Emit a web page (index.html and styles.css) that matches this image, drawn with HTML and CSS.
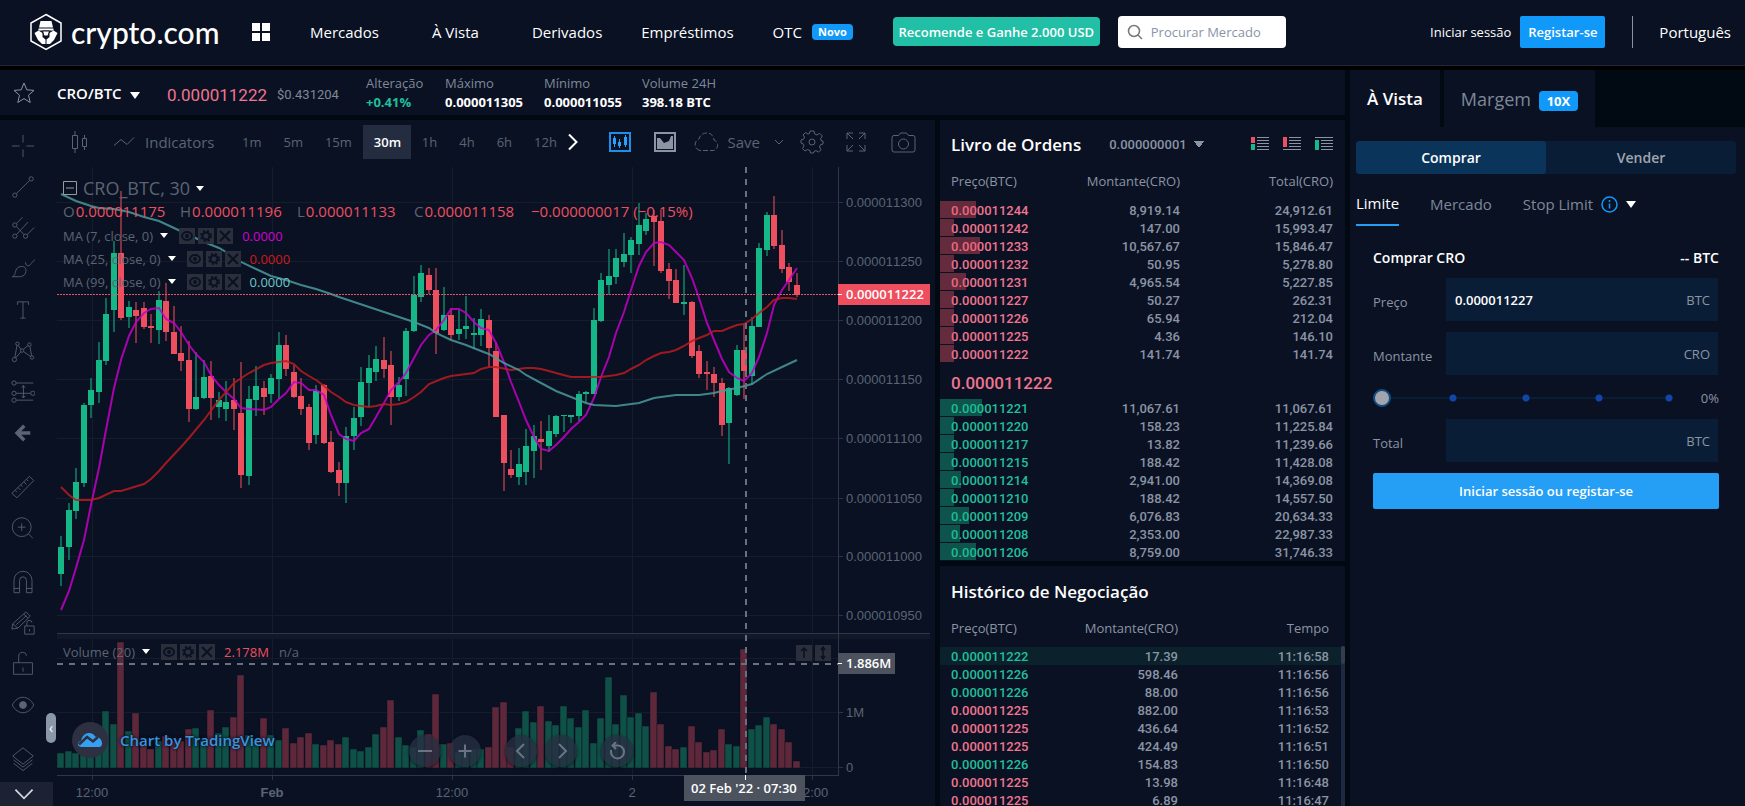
FILE: index.html
```html
<!DOCTYPE html>
<html lang="pt">
<head>
  <meta charset="UTF-8" />
  <meta name="viewport" content="width=device-width, initial-scale=1" />
  <title>CRO/BTC | Crypto.com Exchange</title>
  <link rel="stylesheet" href="styles.css">
</head>
<body>

<!-- Header -->
<header class="header">
  <a class="logo" href="#" aria-label="crypto.com">
    <svg width="34" height="38" viewBox="0 0 34 38">
      <path d="M17 1.500 32 10v18L17 36.500 2 28V10z" fill="none" stroke="#fff" stroke-width="1.500"/>
      <path d="M11.500 8h11l1.500 6.500H10z M9.500 15.500h15v2h-15z M5.500 20l4-2.500 4 2.500v4l3 2.500v4.500h-3.500L9 27z M28.500 20l-4-2.500-4 2.500v4l-3 2.500v4.500H21l4-4z" fill="#fff"/>
      <path d="M13.500 18h7l-1.500 5h-4z" fill="#fff" stroke="#0a1123"/>
    </svg>
    <span>crypto.com</span>
  </a>
  <button class="apps" aria-label="Apps">
    <svg width="18" height="18" viewBox="0 0 18 18" fill="#fff"><path d="M0 0h8v8H0zM10 0h8v8h-8zM0 10h8v8H0zM10 10h8v8h-8z"/></svg>
  </button>
  <nav class="nav">
    <a class="wide" href="#">Mercados</a>
    <a class="wide" href="#">À Vista</a>
    <a href="#">Derivados</a>
    <a href="#">Empréstimos</a>
    <a class="otc" href="#">OTC <span class="badge">Novo</span></a>
  </nav>
  <button class="refer">Recomende e Ganhe 2.000 USD</button>
  <label class="search">
    <svg width="16" height="16" viewBox="0 0 16 16" fill="none" stroke="#777" stroke-width="1.500"><circle cx="7" cy="7" r="5.500"/><path d="M11 11l4 4"/></svg>
    <input type="text" placeholder="Procurar Mercado" aria-label="Procurar Mercado">
  </label>
  <div class="account">
    <a class="login" href="#">Iniciar sessão</a>
    <a class="signup" href="#">Registar-se</a>
    <a class="lang" href="#">Português</a>
  </div>
</header>

<main class="exchange">
  <!-- Ticker -->
  <section class="ticker">
    <button class="star" aria-label="Favorito">
      <svg width="22" height="22" viewBox="0 0 22 22" fill="none" stroke="#8a94a3"><path d="M11 1l2.800 6.800 7.200.6-5.500 4.800 1.700 7.300L11 16.600l-6.200 3.900 1.700-7.300L1 8.400l7.200-.6z" stroke-linejoin="round"/></svg>
    </button>
    <button class="pair">CRO/BTC <i class="caret"></i></button>
    <span class="price">0.000011222</span>
    <span class="usd">$0.431204</span>
    <dl class="stats">
      <div><dt>Alteração</dt><dd class="up">+0.41%</dd></div>
      <div><dt>Máximo</dt><dd>0.000011305</dd></div>
      <div><dt>Mínimo</dt><dd>0.000011055</dd></div>
      <div><dt>Volume 24H</dt><dd>398.18 BTC</dd></div>
    </dl>
  </section>

  <!-- Chart -->
  <section class="chart">
    <div class="tools">
      <button aria-label="Cross"><svg viewBox="0 0 28 28"><path d="M14 1v9M14 18v9M1 14h9M18 14h9"/></svg></button>
      <button aria-label="Trend line"><svg viewBox="0 0 28 28"><circle cx="4.500" cy="23.500" r="2.500"/><circle cx="23.500" cy="4.500" r="2.500"/><path d="M6.500 21.500l15-15"/></svg></button>
      <button aria-label="Pitchfork"><svg viewBox="0 0 28 28"><circle cx="4.500" cy="10.500" r="2.500"/><circle cx="4.500" cy="23.500" r="2.500"/><circle cx="17" cy="23.500" r="2.500"/><path d="M6.500 8.500l7-7M6.500 21.500L20 7M19 21.500l8-8M6.500 12.500l8.500 9"/></svg></button>
      <button aria-label="Brush"><svg viewBox="0 0 28 28"><path d="M1.500 23c4-1 3-6 5-9 3-4.500 11-4 11 1.500 0 5-3.500 7.500-8 7.500zM17 6c0 6 5 5 6 2l5-5"/></svg></button>
      <button aria-label="Text"><svg viewBox="0 0 28 28"><path d="M7.500 8V4.500h13V8M14 4.500v19M11 23.500h6"/></svg></button>
      <button aria-label="Pattern"><svg viewBox="0 0 28 28"><circle cx="7.500" cy="5.500" r="2"/><circle cx="21.500" cy="6.500" r="2"/><circle cx="13" cy="13.500" r="2"/><circle cx="4" cy="24" r="2.500"/><circle cx="24.500" cy="21.500" r="2"/><path d="M8.500 7.500l3 4.500M14.500 12l5.500-4.500M7 7.500L4.500 21.500M22 8.500l2 11M5.500 22l6-7M15 15l8 5.500"/></svg></button>
      <button aria-label="Position"><svg viewBox="0 0 28 28"><circle cx="3.500" cy="3.500" r="2.500"/><circle cx="3.500" cy="15.500" r="2.500"/><circle cx="25.500" cy="15.500" r="2.500"/><circle cx="3.500" cy="23.500" r="2.500"/><path d="M6 3.500h20M6 15.500h17M6 23.500h20M14.500 6.500v14M12.500 9l2-2.500 2 2.500M12.500 18.500l2 2.500 2-2.500"/></svg></button>
      <button aria-label="Back"><svg viewBox="0 0 28 28"><path d="M15.500 5.500L7 14l8.500 8.500M8 14h14.500" stroke-width="4"/></svg></button>
      <button class="first" aria-label="Ruler"><svg viewBox="0 0 28 28"><path d="M1 21.500L21.500 1.500l5 5L7 26.500zM5 18l2 2M8 14.500l3 3M11.500 11.500l2 2M15 8l3 3M18 5l2 2"/></svg></button>
      <button aria-label="Zoom"><svg viewBox="0 0 28 28"><circle cx="12.500" cy="13" r="11"/><path d="M20.500 21l5 5M8 13h9M12.500 8.500v9"/></svg></button>
      <button class="first" aria-label="Magnet"><svg viewBox="0 0 28 28"><path d="M3.500 26.500V12a10.500 10.500 0 0121 0v14.500h-6.500V12a4 4 0 00-8 0v14.500zM3.500 21.500H10M18 21.500h6.500"/></svg></button>
      <button aria-label="Drawing mode"><svg viewBox="0 0 28 28"><path d="M1 21l1-6L17.500 1l5 5L8 20zM2 15l6 5M15 3.500l5 5M6 16L18 5.500M16 17.500h11v9.500H16zM18.500 17.500v-3a3 3 0 016-1M21.500 21v3"/></svg></button>
      <button aria-label="Lock"><svg viewBox="0 0 28 28"><path d="M3 12.500h22v13.500H3zM9 12.500V5.500a4.500 4.500 0 019-1M14 18v5"/></svg></button>
      <button aria-label="Hide"><svg viewBox="0 0 28 28"><path d="M1.500 14c6-12 19-12 25 0-6 12-19 12-25 0z"/><circle cx="14" cy="14" r="4" fill="#5b6472"/></svg></button>
      <button class="first" aria-label="Objects"><svg viewBox="0 0 28 28"><path d="M14 1l12 9.500L14 20 2 10.500zM3 15l11 8.500L25 15M3 19l11 8.500L25 19"/></svg></button>
      <button class="more" aria-label="Mais"><svg viewBox="0 0 28 28"><path d="M4 9l10 10L24 9" stroke="#d5d9e0" stroke-width="2"/></svg></button>
    </div>

    <div class="chart-main">
      <div class="bar">
        <button class="kind" aria-label="Candles"><svg width="18" height="24" viewBox="0 0 18 24"><path d="M2.500 5.500h5v13h-5zM5 1v4.500M5 18.500V23M12.500 8.500h4v8h-4zM14.500 5v3.500M14.500 16.500V20"/></svg></button>
        <button class="indicators"><svg width="22" height="12" viewBox="0 0 22 12"><path d="M1 9.500l7-6 6 5 7-7"/></svg>Indicators</button>
        <div class="intervals">
          <button>1m</button>
          <button>5m</button>
          <button>15m</button>
          <button class="active">30m</button>
          <button>1h</button>
          <button>4h</button>
          <button>6h</button>
          <button class="end">12h</button>
        </div>
        <button class="next" aria-label="Próximo"><svg width="10" height="18" viewBox="0 0 10 18"><path d="M1 1.500L8.500 9 1 16.500" stroke="#fff" stroke-width="2"/></svg></button>
        <button class="view" aria-label="Chart"><svg width="22" height="20" viewBox="0 0 22 20"><path d="M1 1h20v18H1z" stroke="#1d8fe8" stroke-width="2"/><path d="M4 6h3v6H4zM9 10h3v4H9zM15 5h3v8h-3zM5 4h1v11H5zM10 7h1v9h-1zM16 3h1v12h-1z" fill="#29a0ff" stroke="none"/></svg></button>
        <button class="depth-view" aria-label="Depth"><svg width="22" height="20" viewBox="0 0 22 20"><path d="M1 1h20v18H1z" stroke="#8a94a3" stroke-width="2"/><path d="M3 17V6h3l4 5 5-2 2-5h2v13z" fill="#8a94a3" stroke="none"/></svg></button>
        <button class="save"><svg width="27" height="20" viewBox="0 0 27 20"><path d="M7 18.500a6 6 0 01-1-11.500C7.500 2 11 1 14 1c4 0 6.500 3 7 7a5.500 5.500 0 01-.5 10.500z" stroke-dasharray="5 2"/></svg>Save</button>
        <button class="drop" aria-label="Layouts"><svg width="10" height="6" viewBox="0 0 10 6"><path d="M1 1l4 4 4-4"/></svg></button>
        <button class="gear" aria-label="Settings"><svg width="24" height="24" viewBox="0 0 24 24"><path d="M10 1h4l.7 3 2.300 1 2.700-1.700 2.700 2.700L20.500 8.700l1 2.300H23v3l-2.500.7-1 2.300 1.500 2.700-2.500 2.500L16 20.500l-2 1-.5 1.500h-3L10 20.500l-2.500-1L5 21l-2.500-2.500L4 16l-1-2.300-2-.7v-3l2.500-.7 1-2.300L3 5l2.500-2.500L8 4l1.500-.5z"/><circle cx="12" cy="12" r="3"/></svg></button>
        <button class="full" aria-label="Fullscreen"><svg width="20" height="20" viewBox="0 0 20 20"><path d="M1 7V1h6M1 1l6 6M19 7V1h-6M19 1l-6 6M1 13v6h6M1 19l6-6M19 13v6h-6M19 19l-6-6"/></svg></button>
        <button class="camera" aria-label="Screenshot"><svg width="25" height="21" viewBox="0 0 25 21"><path d="M3 3.500h4.500l2-2.500h6l2 2.500H22a2 2 0 012 2V18a2 2 0 01-2 2H3a2 2 0 01-2-2V5.500a2 2 0 012-2z"/><circle cx="12.500" cy="12" r="5"/></svg></button>
      </div>

      <div class="stage">
        <svg class="plot" id="plot" viewBox="57 167 878 639" preserveAspectRatio="xMinYMin meet"></svg>

        <div class="legend">
          <p class="symbol"><svg width="14" height="14" viewBox="0 0 14 14"><path d="M.5.500h13v13H.500zM3 7h8" fill="none" stroke="#9a9a9a"/></svg>CRO_BTC, 30 <i class="caret"></i></p>
          <p class="ohlc"><span>O<b>0.000011175</b></span><span>H<b>0.000011196</b></span><span>L<b>0.000011133</b></span><span>C<b>0.000011158</b></span><b>−0.000000017 (−0.15%)</b></p>
          <p class="study">MA (7, close, 0) <i class="caret"></i><span class="acts"></span><b class="ma7">0.0000</b></p>
          <p class="study">MA (25, close, 0) <i class="caret"></i><span class="acts"></span><b class="ma25">0.0000</b></p>
          <p class="study">MA (99, close, 0) <i class="caret"></i><span class="acts"></span><b class="ma99">0.0000</b></p>
        </div>

        <div class="legend volume">
          <p class="study">Volume (20) <i class="caret"></i><span class="acts"></span><b class="vol">2.178M</b><span class="na">n/a</span></p>
        </div>

        <button class="collapse" aria-label="Recolher">‹</button>

        <a class="brand" href="#">
          <span><svg width="26" height="16" viewBox="0 0 26 16"><path d="M1 12.500c0-2 1-3 3-3.500C5 4 8 1 12 1c3 0 5 1.500 6 3.500 4 0 7 3 7 7 0 2-1 3.500-3 3.500H5c-2.500 0-4-1-4-2.500z" fill="#35a0f0"/><path d="M2 12.500L10 5l6 4.500L21 5" fill="none" stroke="#2c3040" stroke-width="2.500"/></svg></span>
          Chart by TradingView
        </a>

        <div class="controls">
          <button aria-label="Zoom out"><svg viewBox="0 0 18 18"><path d="M2 9h14"/></svg></button>
          <button aria-label="Zoom in"><svg viewBox="0 0 18 18"><path d="M2.500 9h13M9 2.500v13"/></svg></button>
          <button class="gap" aria-label="Left"><svg viewBox="0 0 18 18"><path d="M12 2L5 9l7 7"/></svg></button>
          <button aria-label="Right"><svg viewBox="0 0 18 18"><path d="M7 2l7 7-7 7"/></svg></button>
          <button class="gap" aria-label="Reset"><svg viewBox="0 0 18 18"><path d="M3 8v2a6.500 6.500 0 106-6.500H5.500M8 0L4.500 3.500 8 7"/></svg></button>
        </div>
      </div>
    </div>
  </section>

  <!-- Order book -->
  <section class="book">
    <div class="book-head">
      <h2>Livro de Ordens</h2>
      <select aria-label="Decimais"><option>0.000000001</option></select>
      <div class="modes">
        <button aria-label="Tudo"><svg width="18" height="14" viewBox="0 0 18 14"><path d="M0 0h4v6H0z" fill="#ea5263"/><path d="M0 7h4v6H0z" fill="#17b889"/><path d="M6 .5h12M6 3.500h12M6 6.500h12M6 9.500h12M6 12.500h12" stroke="#8a94a3"/></svg></button>
        <button aria-label="Vendas"><svg width="18" height="14" viewBox="0 0 18 14"><path d="M0 0h4v10H0z" fill="#ea5263"/><path d="M6 .5h12M6 3.500h12M6 6.500h12M6 9.500h12M0 12.500h18" stroke="#8a94a3"/></svg></button>
        <button aria-label="Compras"><svg width="18" height="14" viewBox="0 0 18 14"><path d="M0 3h4v10H0z" fill="#17b889"/><path d="M0 .5h18M6 3.500h12M6 6.500h12M6 9.500h12M6 12.500h12" stroke="#8a94a3"/></svg></button>
      </div>
    </div>
    <table>
      <thead><tr><th>Preço(BTC)</th><th>Montante(CRO)</th><th>Total(CRO)</th></tr></thead>
      <tbody class="sell" id="asks"></tbody>
    </table>
    <p class="last">0.000011222</p>
    <table>
      <tbody class="buy" id="bids"></tbody>
    </table>
  </section>

  <!-- Trade history -->
  <section class="history">
    <h2>Histórico de Negociação</h2>
    <div class="scroll">
      <table>
        <thead><tr><th>Preço(BTC)</th><th>Montante(CRO)</th><th>Tempo</th></tr></thead>
        <tbody id="trades"></tbody>
      </table>
      <div class="track"><div class="thumb"></div></div>
    </div>
  </section>

  <!-- Order form -->
  <aside class="order">
    <div class="tabs">
      <button class="active">À Vista</button>
      <button>Margem <span class="badge">10X</span></button>
    </div>
    <div class="order-body">
      <div class="side">
        <button class="active">Comprar</button>
        <button>Vender</button>
      </div>
      <div class="types">
        <button class="active">Limite</button>
        <button>Mercado</button>
        <button>Stop Limit
          <svg width="17" height="17" viewBox="0 0 17 17" fill="none" stroke="#1199fa" stroke-width="1.500"><circle cx="8.500" cy="8.500" r="7.500"/><path d="M8.500 7.500v5M8.500 4v2"/></svg>
          <i class="caret"></i>
        </button>
      </div>
      <form class="form">
        <div class="form-head"><h3>Comprar CRO</h3><span>-- BTC</span></div>
        <div class="field"><label for="preco">Preço</label><div class="box"><input id="preco" type="text" value="0.000011227"><span>BTC</span></div></div>
        <div class="field"><label for="montante">Montante</label><div class="box"><input id="montante" type="text"><span>CRO</span></div></div>
        <div class="slider"><input type="range" min="0" max="100" value="0" aria-label="Percentagem"><span>0%</span></div>
        <div class="field"><label for="total">Total</label><div class="box"><input id="total" type="text"><span>BTC</span></div></div>
        <button class="submit" type="button">Iniciar sessão ou registar-se</button>
      </form>
    </div>
  </aside>
</main>

<script src="script.js"></script>
</body>
</html>
```
FILE: styles.css
```css
* {
  box-sizing: border-box;
}
body {
  font-family: "Open Sans", sans-serif;
  font-size: 14px;
  margin: 0;
  height: 100vh;
  overflow: hidden;
  display: flex;
  flex-direction: column;
  background: #010913;
  color: #fff;
}
a {
  color: inherit;
  text-decoration: none;
}
button, input, select {
  font: inherit;
  color: inherit;
  background: none;
  border: 0;
  padding: 0;
  margin: 0;
}
button {
  cursor: pointer;
}
h2, h3, p, dl, dd {
  margin: 0;
}
svg {
  display: block;
}
.caret {
  display: inline-block;
  border: 5px solid transparent;
  border-top: 7px solid #fff;
  border-bottom: 0;
}

/* Header */
.header {
  display: flex;
  align-items: center;
  height: 70px;
  padding: 0 14px 7px 29px;
  background: linear-gradient(#0a1123 65px, #1e2638 65px, #1e2638 66px, #000 66px);
  white-space: nowrap;
}
.header > * {
  flex-shrink: 0;
}
.logo {
  display: flex;
  align-items: center;
  gap: 8px;
  width: 223px;
  font-family: Lato, sans-serif;
  font-size: 30px;
  font-weight: 500;
  line-height: 34px;
}
.nav {
  display: flex;
  gap: 39px;
  margin: 0 40px;
  font-size: 15px;
}
.nav .wide {
  margin-right: 14px;
}
.otc {
  display: flex;
  align-items: center;
  gap: 10px;
}
.badge {
  background: #1199fa;
  border-radius: 4px;
  font-weight: bold;
  font-size: 11px;
  line-height: 16px;
  padding: 0 6px;
}
.refer {
  height: 29px;
  width: 207px;
  border-radius: 4px;
  background: #21bfa5;
  font-size: 13px;
  font-weight: 600;
}
.search {
  display: flex;
  align-items: center;
  gap: 8px;
  width: 168px;
  height: 32px;
  margin-left: 18px;
  padding-left: 9px;
  background: #fff;
  border-radius: 4px;
}
.search input {
  width: 130px;
  font-size: 13px;
  color: #333;
}
.search input::placeholder {
  color: #8a94a6;
}
.account {
  display: flex;
  align-items: center;
  margin-left: auto;
}
.login {
  font-size: 13px;
}
.signup {
  margin: 0 27px 0 9px;
  width: 85px;
  text-align: center;
  line-height: 32px;
  background: #1199fa;
  border-radius: 2px;
  font-size: 13px;
  font-weight: 600;
}
.lang {
  border-left: 1px solid #8a94a6;
  padding-left: 26px;
  line-height: 32px;
  font-size: 15px;
}

/* Page grid */
.exchange {
  flex: 1;
  min-height: 0;
  display: grid;
  grid-template-columns: 1fr 405px 395px;
  grid-template-rows: 45px 441px 1fr;
  gap: 5px;
}
.ticker, .chart, .book, .history, .order-body, .tabs button {
  background: #0a1123;
}
.ticker {
  grid-column: 1 / 3;
}
.chart {
  grid-column: 1;
  grid-row: 2 / 4;
}
.book {
  grid-column: 2;
  grid-row: 2;
}
.history {
  grid-column: 2;
  grid-row: 3;
}
.order {
  grid-column: 3;
  grid-row: 1 / 4;
}

/* Ticker */
.ticker {
  display: flex;
  align-items: center;
  padding-left: 13px;
  white-space: nowrap;
}
.pair {
  width: 88px;
  margin: 0 22px;
  text-align: left;
  font-size: 15px;
  font-weight: 600;
}
.pair .caret {
  margin-left: 4px;
}
.price {
  font-family: Roboto, sans-serif;
  font-size: 17px;
  width: 110px;
  padding-top: 4px;
  color: #f0758f;
}
.usd {
  font-family: Roboto, sans-serif;
  font-size: 13px;
  width: 89px;
  padding-top: 4px;
  color: #7e8898;
}
.stats {
  display: grid;
  grid-template-columns: 79px 99px 98px 100px;
  font-size: 13px;
  line-height: 19px;
}
.stats dt {
  color: #7e8898;
}
.stats dd {
  font-weight: bold;
}
.stats .up {
  color: #20bf9b;
}

/* Chart */
.chart {
  display: flex;
  min-height: 0;
  min-width: 0;
  color: #5b6472;
}
.tools {
  width: 57px;
  flex-shrink: 0;
  display: flex;
  flex-direction: column;
  padding-top: 5px;
}
.tools button {
  width: 46px;
  height: 41px;
  flex-shrink: 0;
  display: grid;
  place-items: center;
}
.tools .first {
  margin-top: 13px;
}
.tools .more {
  width: 53px;
  height: 24px;
  margin-top: auto;
  padding-right: 6px;
  background: #1c2234;
}
.tools svg {
  width: 24px;
  height: 24px;
  fill: none;
  stroke: #5b6472;
}
.chart-main {
  flex: 1;
  min-width: 0;
  display: flex;
  flex-direction: column;
}
.bar {
  display: flex;
  align-items: center;
  height: 47px;
  padding: 0 19px 3px 13px;
}
.bar button {
  flex-shrink: 0;
}
.bar svg {
  fill: none;
  stroke: #5b6472;
}
.indicators {
  display: flex;
  align-items: center;
  gap: 10px;
  width: 118px;
  margin-left: 25px;
  font-size: 15px;
}
.intervals {
  display: flex;
  align-items: center;
  font-size: 13px;
}
.intervals button {
  height: 34px;
  padding: 0 11px;
}
.intervals .active {
  width: 48px;
  background: #232d3f;
  color: #fff;
  font-weight: 600;
}
.intervals .end {
  padding-right: 0;
}
.next {
  margin: 0 auto 0 11px;
}
.view {
  margin-right: 23px;
}
.depth-view {
  margin-right: 17px;
}
.save {
  display: flex;
  align-items: center;
  gap: 8px;
  font-size: 15px;
}
.drop {
  margin: 0 16px 0 14px;
}
.full {
  margin: 0 25px 0 22px;
}
.stage {
  position: relative;
  flex: 1;
  min-height: 0;
}
.plot {
  width: 100%;
  height: 100%;
}
.plot text {
  font-family: "Liberation Sans", sans-serif;
  font-size: 13px;
  font-kerning: none;
  fill: #5b6472;
}
.plot .tag {
  font-family: "Open Sans", sans-serif;
  font-weight: 600;
  fill: #fff;
}
.plot .day {
  font-weight: bold;
}

/* Text over the chart */
.legend {
  position: absolute;
  left: 6px;
  top: 9px;
  white-space: nowrap;
}
.legend.volume {
  top: 473px;
}
.legend b {
  font-weight: normal;
  color: #ee4f5f;
}
.legend .caret {
  border-width: 5px 4px 0;
}
.symbol {
  display: flex;
  align-items: center;
  gap: 6px;
  font-size: 18px;
  line-height: 24px;
}
.ohlc {
  display: flex;
  font-size: 15px;
  line-height: 22px;
  margin-bottom: 2px;
}
.ohlc span {
  width: 117px;
}
.ohlc span b {
  margin-left: 1px;
}
.study {
  display: flex;
  align-items: center;
  height: 23px;
  font-size: 13px;
}
.study .caret {
  margin: 0 11px 0 7px;
}
.study .na {
  margin-left: 10px;
}
.acts {
  display: flex;
  gap: 3px;
  margin-right: 9px;
}
.acts button {
  width: 16px;
  height: 16px;
  background: #2a2f3b;
}
.acts svg {
  fill: none;
  stroke: #0a1123;
  stroke-width: 2;
}
.legend .ma7 {
  color: #d400d4;
}
.legend .ma25 {
  color: #d01818;
}
.legend .ma99 {
  color: #6cc8c8;
}
.collapse {
  position: absolute;
  left: -11px;
  top: 546px;
  width: 10px;
  height: 30px;
  border-radius: 5px;
  background: #8a97a8;
  color: #fff;
  line-height: 26px;
}
.brand {
  position: absolute;
  left: 15px;
  top: 555px;
  display: flex;
  align-items: center;
  gap: 12px;
  font-size: 15px;
  font-weight: 600;
  color: #3a94dc;
  text-shadow: 0 0 3px #0a1123, 0 0 3px #0a1123;
}
.brand span {
  width: 36px;
  height: 36px;
  display: grid;
  place-items: center;
  border-radius: 50%;
  background: #2c3040;
}
.controls {
  position: absolute;
  left: 352px;
  top: 568px;
  display: flex;
  gap: 8px;
}
.controls button {
  width: 32px;
  height: 32px;
  display: grid;
  place-items: center;
  border-radius: 50%;
  background: rgba(38, 46, 65, 0.8);
  box-shadow: 0 1px 3px rgba(0, 0, 0, 0.6);
}
.controls .gap {
  margin-left: 16px;
}
.controls svg {
  width: 18px;
  height: 18px;
  fill: none;
  stroke: #6a7383;
  stroke-width: 2;
}

/* Order book and history */
h2 {
  font-size: 17px;
  font-weight: 600;
}
.book-head {
  display: flex;
  align-items: center;
  height: 48px;
  padding: 0 12px 0 11px;
}
.book-head select {
  appearance: none;
  width: 96px;
  margin-left: 28px;
  font-family: Roboto, sans-serif;
  font-size: 13px;
  font-weight: 500;
  color: #8a94a3;
  background: linear-gradient(to bottom left, #8a94a3 50%, transparent 50%) 85px 4px / 5px 7px no-repeat,
    linear-gradient(to bottom right, #8a94a3 50%, transparent 50%) 90px 4px / 5px 7px no-repeat;
}
.modes {
  display: flex;
  gap: 14px;
  margin-left: auto;
}
table {
  width: 100%;
  table-layout: fixed;
  border-collapse: collapse;
  font-family: Roboto, sans-serif;
  font-size: 13px;
  font-weight: 500;
  color: #8a94a3;
}
th {
  height: 33px;
  padding: 0 0 7px;
  font-family: "Open Sans", sans-serif;
  font-weight: normal;
  text-align: right;
}
td {
  height: 18px;
  padding: 0;
  text-align: right;
}
th:first-child, td:first-child {
  position: relative;
  width: 130px;
  padding-left: 11px;
  text-align: left;
}
th:nth-child(2), td:nth-child(2) {
  width: 110px;
}
th:last-child, td:last-child {
  padding-right: 12px;
}
.depth {
  position: absolute;
  left: 0;
  top: 0;
  height: 17px;
}
.sell .depth {
  background: rgba(234, 82, 99, 0.4);
}
.buy .depth {
  background: rgba(23, 184, 137, 0.4);
}
.sell td:first-child, .down {
  color: #f0758f;
}
.buy td:first-child, .rise {
  color: #20bf9b;
}
.last {
  height: 36px;
  padding-left: 11px;
  font-family: Roboto, sans-serif;
  font-size: 17px;
  font-weight: 500;
  line-height: 40px;
  color: #f0758f;
}
.history {
  min-height: 0;
  overflow: hidden;
}
.history h2 {
  padding-left: 11px;
  line-height: 52px;
}
.scroll {
  display: flex;
}
.history th {
  height: 29px;
  padding-bottom: 9px;
}
.history th:nth-child(2) {
  width: 108px;
}
.history tbody tr:first-child {
  background: #0b212c;
}
.track {
  width: 4px;
  flex-shrink: 0;
  margin-top: 28px;
  background: #1d2943;
  border-radius: 2px;
}
.thumb {
  height: 18px;
  border-radius: 2px;
  background: #343c50;
}

/* Order form */
.order {
  display: flex;
  flex-direction: column;
}
.tabs {
  display: flex;
  gap: 4px;
  height: 57px;
}
.tabs button {
  padding: 0 17px;
  font-size: 18px;
  color: #7e8898;
}
.tabs .active {
  color: #fff;
  font-size: 17px;
  font-weight: 600;
}
.tabs .badge {
  display: inline-block;
  margin-left: 3px;
  color: #fff;
  font-size: 13px;
  line-height: 20px;
  padding: 0 8px;
}
.order-body {
  flex: 1;
  padding: 14px 9px 0 6px;
}
.side {
  display: flex;
  border-radius: 3px;
  background: #0a1d36;
  overflow: hidden;
}
.side button {
  flex: 1;
  height: 33px;
  font-weight: 600;
  color: #a0a6b0;
}
.side .active {
  background: #0b345a;
  color: #fff;
  border-radius: 3px;
}
.types {
  display: flex;
  gap: 31px;
  height: 52px;
  font-size: 15px;
  color: #7e8898;
}
.types button {
  display: flex;
  align-items: center;
  gap: 8px;
  padding-top: 8px;
}
.types .active {
  color: #fff;
  border-bottom: 2px solid #259ff5;
}
.form {
  padding: 20px 17px 0;
}
.form-head {
  display: flex;
  justify-content: space-between;
  line-height: 24px;
  margin-bottom: 8px;
}
.form-head h3, .form-head span {
  font-size: 14px;
  font-weight: 600;
}
.field {
  display: flex;
  align-items: center;
  margin: 0 1px 11px 0;
  font-size: 13px;
  color: #8a94a3;
}
.field label {
  width: 73px;
  padding-top: 4px;
}
.box {
  flex: 1;
  display: flex;
  align-items: center;
  height: 43px;
  padding: 0 8px 0 9px;
  background: #0a1d36;
}
.box input {
  flex: 1;
  min-width: 0;
  color: #fff;
  font-weight: 600;
}
.slider {
  display: flex;
  align-items: center;
  justify-content: space-between;
  height: 23px;
  margin-bottom: 10px;
  font-size: 13px;
  color: #8a94a3;
}
.slider input {
  appearance: none;
  width: 300px;
  height: 18px;
  background:
    radial-gradient(#1046a8 3px, transparent 4px) 26% 50% / 8px 8px no-repeat,
    radial-gradient(#1046a8 3px, transparent 4px) 51% 50% / 8px 8px no-repeat,
    radial-gradient(#1046a8 3px, transparent 4px) 76% 50% / 8px 8px no-repeat,
    radial-gradient(#1046a8 3px, transparent 4px) 100% 50% / 8px 8px no-repeat,
    linear-gradient(#0a1d36, #0a1d36) 0 50% / 100% 2px no-repeat;
}
.slider input::-webkit-slider-thumb {
  appearance: none;
  width: 18px;
  height: 18px;
  border: 2px solid #0f4f86;
  border-radius: 50%;
  background: #a3a5ac;
}
.submit {
  width: 100%;
  height: 36px;
  border-radius: 2px;
  background: #259ff5;
  font-size: 13px;
  font-weight: 600;
}
```
FILE: script.js
```js
// Order book and trades
const asks = [
  ["0.000011244", "8,919.14", "24,912.61", 36],
  ["0.000011242", "147.00", "15,993.47", 14],
  ["0.000011233", "10,567.67", "15,846.47", 40],
  ["0.000011232", "50.95", "5,278.80", 14],
  ["0.000011231", "4,965.54", "5,227.85", 26],
  ["0.000011227", "50.27", "262.31", 14],
  ["0.000011226", "65.94", "212.04", 14],
  ["0.000011225", "4.36", "146.10", 14],
  ["0.000011222", "141.74", "141.74", 14]
];
const bids = [
  ["0.000011221", "11,067.61", "11,067.61", 42],
  ["0.000011220", "158.23", "11,225.84", 14],
  ["0.000011217", "13.82", "11,239.66", 14],
  ["0.000011215", "188.42", "11,428.08", 14],
  ["0.000011214", "2,941.00", "14,369.08", 21],
  ["0.000011210", "188.42", "14,557.50", 14],
  ["0.000011209", "6,076.83", "20,634.33", 29],
  ["0.000011208", "2,353.00", "22,987.33", 20],
  ["0.000011206", "8,759.00", "31,746.33", 36]
];
const trades = [
  ["rise", "0.000011222", "17.39", "11:16:58"],
  ["rise", "0.000011226", "598.46", "11:16:56"],
  ["rise", "0.000011226", "88.00", "11:16:56"],
  ["down", "0.000011225", "882.00", "11:16:53"],
  ["down", "0.000011225", "436.64", "11:16:52"],
  ["down", "0.000011225", "424.49", "11:16:51"],
  ["rise", "0.000011226", "154.83", "11:16:50"],
  ["down", "0.000011225", "13.98", "11:16:48"],
  ["down", "0.000011225", "6.89", "11:16:47"]
];

function bookRows(list) {
  return list.map(r => `<tr><td><span class="depth" style="width:${r[3]}px"></span>${r[0]}</td><td>${r[1]}</td><td>${r[2]}</td></tr>`).join("");
}
document.getElementById("asks").innerHTML = bookRows(asks);
document.getElementById("bids").innerHTML = bookRows(bids);
document.getElementById("trades").innerHTML = trades
  .map(t => `<tr><td class="${t[0]}">${t[1]}</td><td>${t[2]}</td><td>${t[3]}</td></tr>`).join("");

// Study buttons: hide, settings, remove
document.querySelectorAll(".acts").forEach(el => {
  el.innerHTML = `
    <button aria-label="Hide"><svg viewBox="0 0 16 16"><ellipse cx="8" cy="8" rx="5" ry="4"/><circle cx="8" cy="8" r="1"/></svg></button>
    <button aria-label="Settings"><svg viewBox="0 0 16 16"><circle cx="8" cy="8" r="3.500"/><circle cx="8" cy="8" r="5" stroke-dasharray="2 2"/></svg></button>
    <button aria-label="Remove"><svg viewBox="0 0 16 16"><path d="M3 3l10 10M13 3L3 13"/></svg></button>`;
});

// Candles: side, high, top, bottom, low, volume top
const candles = `
g 1127 1161 1241 1277 820|g 1028 1049 1161 1199 813|g 923 965 1053 1077 820|g 728 735 968 981 790
g 653 691 735 775 775|g 547 599 696 728 770|g 415 461 602 615 694|g 243 278 450 515 731
r 92 278 473 480 486|g 423 441 471 504 752|r 427 451 467 549 699|r 427 444 500 508 795
r 462 498 503 549 806|g 393 420 511 552 783|r 369 424 517 542 768|r 437 515 582 582 783
r 498 580 602 633 783|r 542 599 748 786 748|g 575 711 748 750 744|g 601 650 713 716 780
r 602 647 713 779 690|g 695 721 741 775 760|g 663 725 748 782 741|r 654 721 748 809 711
r 605 758 944 983 584|g 677 718 947 975 765|g 617 678 720 768 780|r 664 685 710 765 713
g 641 654 701 728 765|g 517 556 657 718 779|r 524 556 626 647 744|r 614 637 711 713 789
r 654 708 748 765 772|r 732 741 850 870 758|g 674 694 826 853 792|r 672 675 850 852 795
r 812 847 935 940 779|r 907 931 968 1009 792|g 802 829 970 1028 772|g 741 775 829 870 806
g 622 667 771 798 812|g 586 624 670 741 801|g 559 596 636 664 762|r 532 599 626 654 741
r 572 616 711 795 659|g 650 674 711 724 772|g 505 512 657 708 795|g 347 405 514 515 800
g 315 339 412 426 751|r 325 346 390 403 762|r 325 390 518 582 643|g 380 464 511 514 792
r 444 464 525 539 789|g 451 508 521 541 815|g 407 498 508 538 808|g 474 520 525 566 806
g 447 478 525 559 806|r 464 481 565 620 801|r 545 573 771 772 680|r 765 766 910 994 666
r 869 928 944 955 801|g 864 911 951 975 744|g 806 857 935 975 694|g 796 829 873 955 727
r 782 836 846 931 677|g 765 812 857 876 724|g 766 768 822 832 734|g 765 765 768 816 677
g 765 765 770 788 713|g 694 701 768 782 741|g 694 697 701 728 690|g 444 481 701 701 789
g 339 359 484 486 713|g 267 349 376 405 591|g 267 295 352 372 731|g 220 281 305 322 646
g 231 240 285 339 711|g 128 196 251 285 700|g 160 177 213 224 738|r 150 168 186 318 636
r 150 183 332 339 731|r 308 328 362 417 799|r 328 359 430 430 806|g 315 426 431 464 801
r 424 427 588 593 738|r 555 572 643 654 786|r 602 636 642 691 816|r 622 643 670 711 809
r 653 670 795 829 748|g 681 684 788 911 792|g 555 569 706 708 799|r 491 569 633 718 507
g 471 498 649 674 748|g 250 264 500 501 734|g 156 166 270 288 711|r 108 166 257 267 731
r 210 254 328 339 748|r 308 322 366 393 786|r 339 376 406 410 843`
  .trim().split(/[|\n]/).map(c => c.split(" "));

// Moving averages as bar:value
const ma7 = "0:1350 1:1294 2:1225 3:1140 4:1035 5:925 6:810 7:685 8:600 9:527 10:487 11:460 12:446 13:443 14:478 15:490 16:515 17:555 18:582 19:605 20:645 21:675 22:695 23:718 24:745 25:748 27:749 28:740 29:717 30:698 31:665 32:668 33:691 34:690 35:705 36:765 37:822 38:838 39:842 40:818 41:806 42:770 43:728 44:690 45:665 46:640 47:595 48:555 49:525 50:510 51:480 52:448 53:448 54:460 55:487 56:505 57:510 58:550 59:605 60:665 61:725 62:780 63:830 64:867 65:872 66:855 67:830 68:808 69:785 70:766 71:715 72:650 73:590 74:520 75:455 76:390 77:318 78:275 79:248 80:247 81:254 82:275 83:300 84:355 85:415 86:490 87:540 88:598 89:637 90:655 91:663 92:640 93:590 94:520 95:435 96:390 97:360 98:325";
const ma25 = "0:982 1:1005 2:1020 4:1020 5:1015 7:994 8:994 11:973 12:957 13:933 14:908 16:860 17:833 19:780 21:720 23:668 25:640 27:615 28:610 30:604 31:612 32:633 33:648 34:660 35:678 36:697 37:711 38:726 39:736 41:742 42:737 43:733 44:736 45:733 46:726 47:712 48:695 49:673 51:655 52:648 55:638 56:628 57:621 58:620 60:631 62:624 63:625 64:628 65:634 66:638 68:651 72:650 74:646 75:638 76:628 77:614 78:600 79:588 80:580 81:577 82:570 83:557 84:542 85:533 86:524 87:513 88:512 89:505 90:496 91:492 92:478 93:460 94:440 95:420 96:413 97:413 98:418";
const ma99 = "0:103 2:123 4:137 5:143 7:147 9:155 11:170 13:182 15:205 17:225 19:245 21:265 22:275 23:290 24:306 26:327 28:347 30:360 32:374 34:388 36:402 37:412 39:425 41:440 43:455 45:472 47:487 49:505 50:518 52:541 54:555 56:573 57:581 59:608 61:630 62:645 64:668 66:692 68:712 70:730 71:736 74:737 77:728 79:714 80:710 82:706 85:705 87:698 88:694 90:684 92:672 94:642 96:620 98:601";

const barX = i => Math.round(61 + i * 7.506);
const priceY = v => Math.round(160 + v / 3);
const volY = v => Math.round(480 + v / 3);

function line(data, color) {
  const pts = data.split(" ").map(p => {
    const [i, v] = p.split(":");
    return barX(+i) + "," + priceY(+v);
  });
  return `<polyline points="${pts.join(" ")}" fill="none" stroke="${color}" stroke-width="2" opacity="0.85"/>`;
}

let svg = "";

// Grid and axes
const hours = [[93, "12:00"], [273, "Feb"], [453, "12:00"], [633, "2"], [813, "12:00"]];
hours.forEach(([x, label]) => {
  svg += `<path d="M${x - 1}.5 167V775" stroke="#151d2b"/><path d="M${x - 1}.5 776v4" stroke="#2a3344"/>`;
  svg += `<text x="${x - 1}" y="797" text-anchor="middle"${label === "Feb" ? ' class="day"' : ""}>${label}</text>`;
});
[202, 261, 320, 379, 438, 498, 556, 615].forEach((y, i) => {
  const label = "0.0000" + (11300 - i * 50);
  svg += `<path d="M57 ${y}.5H838" stroke="#151d2b"/><path d="M839 ${y}.5h4" stroke="#2a3344"/><text x="846" y="${y + 5}">${label}</text>`;
});
[[658, ""], [712, "1M"], [767, "0"]].forEach(([y, label]) => {
  svg += `<path d="M57 ${y}.5H838" stroke="#151d2b"/><path d="M839 ${y}.5h4" stroke="#2a3344"/><text x="846" y="${y + 5}">${label}</text>`;
});
svg += `<rect x="57" y="634" width="873" height="5" fill="#111929"/><path d="M57 633.500H930M838.500 167V775M57 775.500H839" stroke="#2f3747" fill="none"/>`;

// Volume
candles.forEach((c, i) => {
  const y = volY(+c[5]);
  svg += `<rect x="${barX(i) - 4}" y="${y}" width="7" height="${768 - y}" fill="${c[0] === "g" ? "#0f5047" : "#5f283a"}" stroke="#0a1123" stroke-width="0.500"/>`;
});

// Candles
candles.forEach((c, i) => {
  const [high, top, bottom, low] = c.slice(1, 5).map(v => priceY(+v));
  const x = barX(i);
  const wick = c[0] === "g" ? "#11856a" : "#a83b4b";
  const body = c[0] === "g" ? "#16b786" : "#ee4f5f";
  svg += `<path d="M${x} ${high}V${low}" stroke="${wick}" stroke-width="1.500"/>`;
  svg += `<rect x="${x - 3}" y="${top}" width="6" height="${Math.max(bottom - top, 1)}" fill="${body}"/>`;
});
svg += line(ma7, "#c400c8") + line(ma25, "#b81c1e") + line(ma99, "#4a9a9c");

// Last price, crosshair and tags
svg += `<path d="M57 294.500H838" stroke="#e05568" stroke-dasharray="2 1"/>`;
svg += `<path d="M746 167V775" stroke="#69717f" stroke-width="2" stroke-dasharray="6 6"/><path d="M57 664H838" stroke="#69717f" stroke-width="2" stroke-dasharray="6 6"/>`;
svg += `<rect x="796" y="645" width="16" height="16" fill="#2a2f3b"/><rect x="815" y="645" width="16" height="16" fill="#2a2f3b"/>`;
svg += `<path d="M804 658v-9M801 651l3-3 3 3M823 647v12M821 650l2-3 2 3M821 656l2 3 2-3" fill="none" stroke="#0a1123" stroke-width="1.500"/>`;
svg += `<rect x="838" y="284" width="92" height="21" fill="#ee4f5f"/><path d="M838 294.500h4" stroke="#fff"/><text class="tag" x="846" y="299">0.000011222</text>`;
svg += `<rect x="838" y="653" width="57" height="21" fill="#4c525e"/><path d="M838 663.500h4" stroke="#fff"/><text class="tag" x="846" y="668">1.886M</text>`;
svg += `<rect x="684" y="775" width="121" height="26" fill="#4c525e"/><path d="M745.500 775v5" stroke="#fff"/><text class="tag" x="691" y="793">02 Feb '22 · 07:30</text>`;

document.getElementById("plot").innerHTML = svg;
```
